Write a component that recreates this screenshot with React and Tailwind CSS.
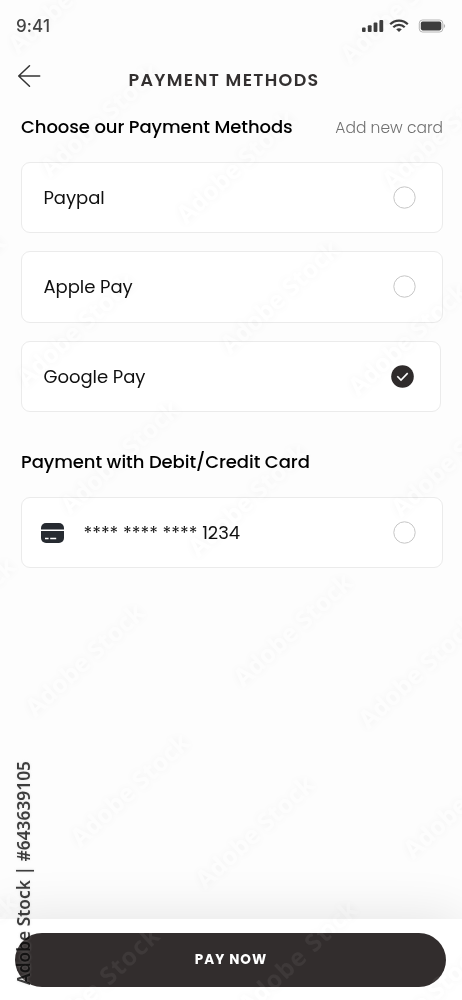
import React from "react";

const FONT = "font-['Poppins','Inter',sans-serif]";

// Start point (baseline left) of every repeated stock mark.
const MARKS = [
  [10, 52], [342, 62], [42, 175], [178, 222], [384, 188], [-112, 345],
  [18, 385], [222, 352], [350, 394], [62, 512], [190, 555], [393, 515],
  [-102, 669], [27, 715], [235, 685], [360, 727], [72, 845], [197, 887],
  [405, 857], [-100, 1005], [35, 1045], [240, 1012], [367, 1055],
];

// The only marks that reach the dark button.
const BUTTON_MARKS = [[35, 1045], [240, 1012], [367, 1055]];

function Marks({ className, marks = MARKS, dx = 0, dy = 0 }) {
  return (
    <div aria-hidden="true" className={"pointer-events-none absolute inset-0 overflow-hidden " + className}>
      {marks.map(([x, y]) => (
        <span
          key={x + "-" + y}
          className="absolute origin-bottom-left -rotate-[43deg] whitespace-nowrap font-['Noto_Sans',sans-serif] text-[24.5px] leading-[26px] font-bold"
          style={{ left: x - dx + 11, top: y - dy - 20 }}
        >
          Adobe Stock
        </span>
      ))}
    </div>
  );
}

function Radio({ checked }) {
  if (checked) {
    return (
      <svg className="size-[23px]" viewBox="0 0 23 23" fill="none">
        <circle cx="11.5" cy="11.5" r="11.3" fill="#2f2b2b" />
        <path d="M6.3 11.3l3.7 3.7 6.7-6.9" stroke="#fff" strokeWidth="1.6" />
      </svg>
    );
  }
  return (
    <svg className="size-[23px]" viewBox="0 0 23 23" fill="none">
      <circle cx="11.5" cy="11.5" r="10.7" stroke="#c6c6c6" />
    </svg>
  );
}

function Option({ children, checked, className = "" }) {
  return (
    <div
      className={
        "flex h-[71.3px] items-center justify-between rounded-[9px] border border-[#ebebeb] bg-white pr-[26px] text-[18px] tracking-[-0.05px] " + className
      }
    >
      {children}
      <Radio checked={checked} />
    </div>
  );
}

function StatusIcons() {
  return (
    <svg className="h-4 w-[86px]" viewBox="0 0 86 16" fill="#3d3d3d">
      <rect x="1" y="9.5" width="3.6" height="4.5" rx="1" />
      <rect x="6.8" y="7.3" width="3.8" height="6.7" rx="1" />
      <rect x="12.6" y="4.6" width="3.8" height="9.4" rx="1" />
      <rect x="18.4" y="2" width="3.8" height="12" rx="1" />
      <g fill="none" stroke="#3d3d3d" strokeWidth="2.2">
        <path d="M29.2 6.2a12.4 12.4 0 0 1 17.6 0" />
        <path d="M32.3 9.3a8 8 0 0 1 11.4 0" />
      </g>
      <path d="M35.2 11.3a4.4 4.4 0 0 1 5.6 0L38 14z" />
      <rect x="58.3" y="2" width="23.5" height="12" rx="3.2" fill="none" stroke="#b5b5b5" />
      <rect x="59.8" y="3.6" width="20.5" height="8.8" rx="1.8" />
      <path d="M82.8 6v4q1.4-.6 1.4-2t-1.4-2z" fill="#b5b5b5" />
    </svg>
  );
}

export default function App() {
  return (
    <div className={"relative flex h-[1000px] w-[462px] flex-col overflow-hidden bg-[#fdfdfd] text-[#101010] " + FONT}>
      <div className="flex h-[52px] items-center justify-between pr-[15px] pl-4">
        <span className="pt-px font-['Inter',sans-serif] text-[17px] font-medium tracking-[0.1px] text-[#444]">9:41</span>
        <StatusIcons />
      </div>

      <header className="grid h-12 grid-cols-[1fr_auto_1fr] items-center pr-[31px] pl-[17px]">
        <svg className="h-6 w-6" viewBox="0 0 24 24" fill="none" stroke="#333" strokeWidth="1.5" strokeLinecap="round" strokeLinejoin="round">
          <path d="M22.7 12h-21M12.5 1.7L1.7 12l10.8 10.3" />
        </svg>
        <h1 className="pt-[7px] text-[17.5px] leading-6 font-semibold tracking-[1.33px] text-[#333030]">PAYMENT METHODS</h1>
        <span />
      </header>

      <main className="flex flex-1 flex-col pr-[19px] pl-[21px]">
        <div className="flex h-[62px] items-center justify-between pb-[9px]">
          <h2 className="text-[18px] font-medium tracking-[-0.08px] text-black">Choose our Payment Methods</h2>
          <button className="pt-0.5 text-[15.5px] font-light text-[#707070]">Add new card</button>
        </div>

        <div className="flex flex-col gap-[18px]">
          <Option className="pl-[21.5px]"><span>Paypal</span></Option>
          <Option className="pl-[21.5px]"><span>Apple Pay</span></Option>
          <Option checked className="mr-[2px] pl-[21.5px]"><span>Google Pay</span></Option>
        </div>

        <div className="flex h-[85px] items-center pt-[14px]">
          <h2 className="text-[18px] font-medium tracking-[-0.08px] text-black">Payment with Debit/Credit Card</h2>
        </div>

        <Option className="pl-[18.5px]">
          <div className="flex flex-1 items-center">
            <svg className="mr-5 h-5 w-[23px]" viewBox="0 0 23 20">
              <path d="M0 6.4V5a5 5 0 0 1 5-5h13a5 5 0 0 1 5 5v1.4z" fill="#272b31" />
              <path d="M0 8h23v7a5 5 0 0 1-5 5H5a5 5 0 0 1-5-5z" fill="#272b31" />
              <path d="M4 15.4h3.6M9.2 15.4h6" stroke="#fff" strokeWidth="1.5" />
            </svg>
            <span>**** **** **** 1234</span>
          </div>
        </Option>
      </main>

      <footer className="h-[81px] bg-white pt-[14px] pr-4 pl-[15px] shadow-[0_0_54px_rgba(0,0,0,0.11)]">
        <button className="relative flex h-[54px] w-full items-center justify-center overflow-hidden rounded-full bg-[#322d2d] pt-px pl-px text-[13.5px] font-bold tracking-[1px] text-white">
          PAY NOW
          <Marks className="text-white/[0.06]" marks={BUTTON_MARKS} dx={15} dy={933} />
        </button>
      </footer>

      <Marks className="text-white mix-blend-multiply [text-shadow:0_0_8px_rgba(0,0,0,0.05)]" />

      <span className="absolute bottom-[15px] left-[10px] rotate-180 whitespace-nowrap font-['Noto_Sans',sans-serif] text-[17.35px] leading-[26px] font-semibold text-black/75 [text-shadow:0_0_3px_rgba(190,190,190,0.4)] [writing-mode:vertical-rl]">
        Adobe Stock | #643639105
      </span>
    </div>
  );
}
